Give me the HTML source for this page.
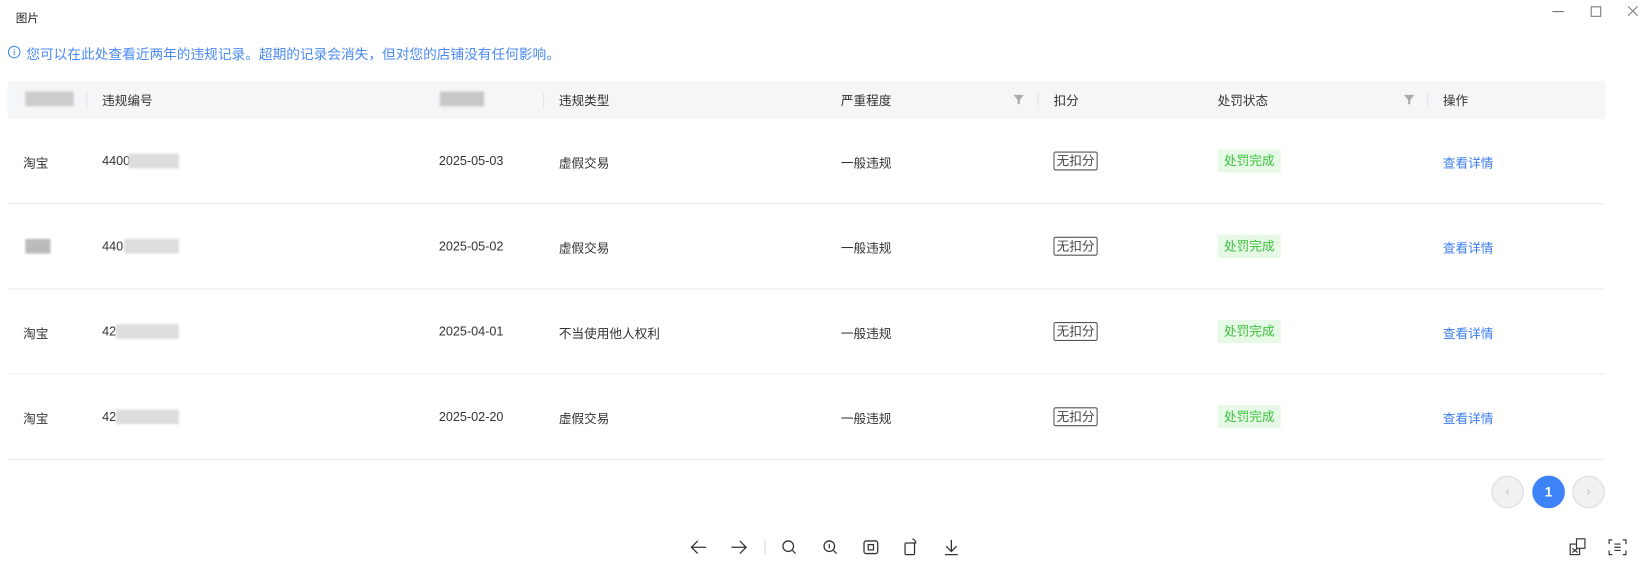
<!DOCTYPE html>
<html><head><meta charset="utf-8"><style>
*{margin:0;padding:0;box-sizing:border-box}
body{width:1647px;height:570px;background:#fff;font-family:"Liberation Sans","Noto Sans CJK SC",sans-serif;font-size:12px;color:#333;position:relative;overflow:hidden}
#w{position:absolute;left:0;top:0;width:1565px;height:542px;transform:scale(1.0524);transform-origin:0 0}
.a{position:absolute;white-space:nowrap}
.hd{position:absolute;left:7px;top:77px;width:1518px;height:36px;background:#f5f6f8}
.sep{position:absolute;top:88px;width:1px;height:16px;background:#e3e5e8}
.row{position:absolute;left:7px;width:1518px;height:1px;background:#ebedf0}
.tag{position:absolute;border:1px solid #555;border-radius:2px;padding:0 2px;height:18px;line-height:16px;font-size:12px;color:#444}
.st{position:absolute;background:#e6f8e6;color:#3cc03c;height:22px;line-height:22px;padding:0 6px;border-radius:2px}
.lk{position:absolute;color:#3a7bf0}
.bl{position:absolute;background:#d8d8da;filter:blur(1px)}
.ic{position:absolute;top:511px}
</style></head><body><div id="w">
<div class="a" style="left:15px;top:9px;font-size:11px;color:#222">图片</div>
<svg class="a" style="left:1472px;top:4px" width="90" height="14" viewBox="0 0 90 14"><path d="M3 7h11" stroke="#777" fill="none"/><rect x="40" y="2.5" width="9" height="9" stroke="#777" fill="none"/><path d="M75 2l9 9M84 2l-9 9" stroke="#777" fill="none"/></svg>
<svg class="a" style="left:7px;top:43px" width="13" height="13"><circle cx="6.5" cy="6.5" r="5.5" stroke="#4a8af4" fill="none"/><path d="M6.5 5.5v4M6.5 3.5v1" stroke="#4a8af4"/></svg>
<div class="a" style="left:25px;top:41px;font-size:13px;color:#4a8af4">您可以在此处查看近两年的违规记录。超期的记录会消失，但对您的店铺没有任何影响。</div>
<div class="hd"></div>
<div class="bl" style="left:24px;top:87px;width:46px;height:14px;background:#ccc"></div>
<div class="sep" style="left:82px"></div>
<div class="a" style="left:97px;top:87px">违规编号</div>
<div class="bl" style="left:418px;top:87px;width:42px;height:14px;background:#c8c8c8"></div>
<div class="sep" style="left:516px"></div>
<div class="a" style="left:531px;top:87px">违规类型</div>
<div class="a" style="left:799px;top:87px">严重程度</div>
<svg class="a" style="left:963px;top:90px" width="10" height="10"><path d="M0 0h10L6 5v4H4V5z" fill="#aaa"/></svg>
<div class="sep" style="left:986px"></div>
<div class="a" style="left:1001px;top:87px">扣分</div>
<div class="a" style="left:1157px;top:87px">处罚状态</div>
<svg class="a" style="left:1334px;top:90px" width="10" height="10"><path d="M0 0h10L6 5v4H4V5z" fill="#aaa"/></svg>
<div class="sep" style="left:1356px"></div>
<div class="a" style="left:1371px;top:87px">操作</div>

<div class="a" style="left:22px;top:146px">淘宝</div><div class="a" style="left:97px;top:146px">4400</div><div class="bl" style="left:122px;top:146px;width:48px;height:14px;background:#ddd"></div><div class="a" style="left:417px;top:146px">2025-05-03</div><div class="a" style="left:531px;top:146px">虚假交易</div><div class="a" style="left:799px;top:146px">一般违规</div><div class="tag" style="left:1001px;top:144px">无扣分</div><div class="st" style="left:1157px;top:142px">处罚完成</div><div class="lk" style="left:1371px;top:146px">查看详情</div>
<div class="row" style="top:193px"></div>
<div class="bl" style="left:24px;top:227px;width:24px;height:14px;background:#bbb"></div><div class="a" style="left:97px;top:227px">440</div><div class="bl" style="left:118px;top:227px;width:52px;height:14px;background:#ddd"></div><div class="a" style="left:417px;top:227px">2025-05-02</div><div class="a" style="left:531px;top:227px">虚假交易</div><div class="a" style="left:799px;top:227px">一般违规</div><div class="tag" style="left:1001px;top:225px">无扣分</div><div class="st" style="left:1157px;top:223px">处罚完成</div><div class="lk" style="left:1371px;top:227px">查看详情</div>
<div class="row" style="top:274px"></div>
<div class="a" style="left:22px;top:308px">淘宝</div><div class="a" style="left:97px;top:308px">42</div><div class="bl" style="left:110px;top:308px;width:60px;height:14px;background:#ddd"></div><div class="a" style="left:417px;top:308px">2025-04-01</div><div class="a" style="left:531px;top:308px">不当使用他人权利</div><div class="a" style="left:799px;top:308px">一般违规</div><div class="tag" style="left:1001px;top:306px">无扣分</div><div class="st" style="left:1157px;top:304px">处罚完成</div><div class="lk" style="left:1371px;top:308px">查看详情</div>
<div class="row" style="top:355px"></div>
<div class="a" style="left:22px;top:389px">淘宝</div><div class="a" style="left:97px;top:389px">42</div><div class="bl" style="left:110px;top:389px;width:60px;height:14px;background:#ddd"></div><div class="a" style="left:417px;top:389px">2025-02-20</div><div class="a" style="left:531px;top:389px">虚假交易</div><div class="a" style="left:799px;top:389px">一般违规</div><div class="tag" style="left:1001px;top:387px">无扣分</div><div class="st" style="left:1157px;top:385px">处罚完成</div><div class="lk" style="left:1371px;top:389px">查看详情</div>
<div class="row" style="top:436px"></div>

<div class="a" style="left:1417px;top:452px;width:31px;height:31px;border-radius:50%;background:#f0f1f3;border:1px solid #dcdde0;text-align:center;line-height:29px;color:#bbb">‹</div>
<div class="a" style="left:1456px;top:452px;width:31px;height:31px;border-radius:50%;background:#3d82f6;text-align:center;line-height:31px;color:#fff;font-weight:bold;font-size:13px">1</div>
<div class="a" style="left:1494px;top:452px;width:31px;height:31px;border-radius:50%;background:#f0f1f3;border:1px solid #dcdde0;text-align:center;line-height:29px;color:#bbb">›</div>

<svg class="ic" style="left:655px" width="260" height="18" viewBox="0 0 260 18" fill="none" stroke="#333" stroke-width="1.2">
<path d="M2 9h14M8 3L2 9l6 6"/><path d="M40 9h14M48 3l6 6-6 6"/><path d="M72 2v14" stroke="#ddd"/>
<circle cx="94" cy="8" r="5"/><path d="M98 12l3 3"/>
<circle cx="133" cy="8" r="5"/><path d="M137 12l3 3M133 6v4"/>
<rect x="166" y="3" width="13" height="12" rx="2"/><rect x="170" y="6.5" width="5" height="5"/>
<rect x="205" y="5" width="9" height="11" rx="1"/><path d="M212 1a4 4 0 0 1 3 4M215 3l0 2-2 0"/>
<path d="M249 2v11M244 8l5 5 5-5M243 16h12"/>
</svg>
<svg class="ic" style="left:1490px" width="60" height="18" viewBox="0 0 60 18" fill="none" stroke="#333" stroke-width="1.1">
<rect x="2" y="6" width="9" height="10"/><rect x="8" y="1" width="8" height="9" fill="#fff"/><path d="M4 10l5 4M9 10l-5 4"/>
<path d="M42 2h-3v4M52 2h3v4M42 16h-3v-4M52 16h3v-4M44 6h6M44 9h6M44 12h6"/>
</svg>
</div></body></html>
